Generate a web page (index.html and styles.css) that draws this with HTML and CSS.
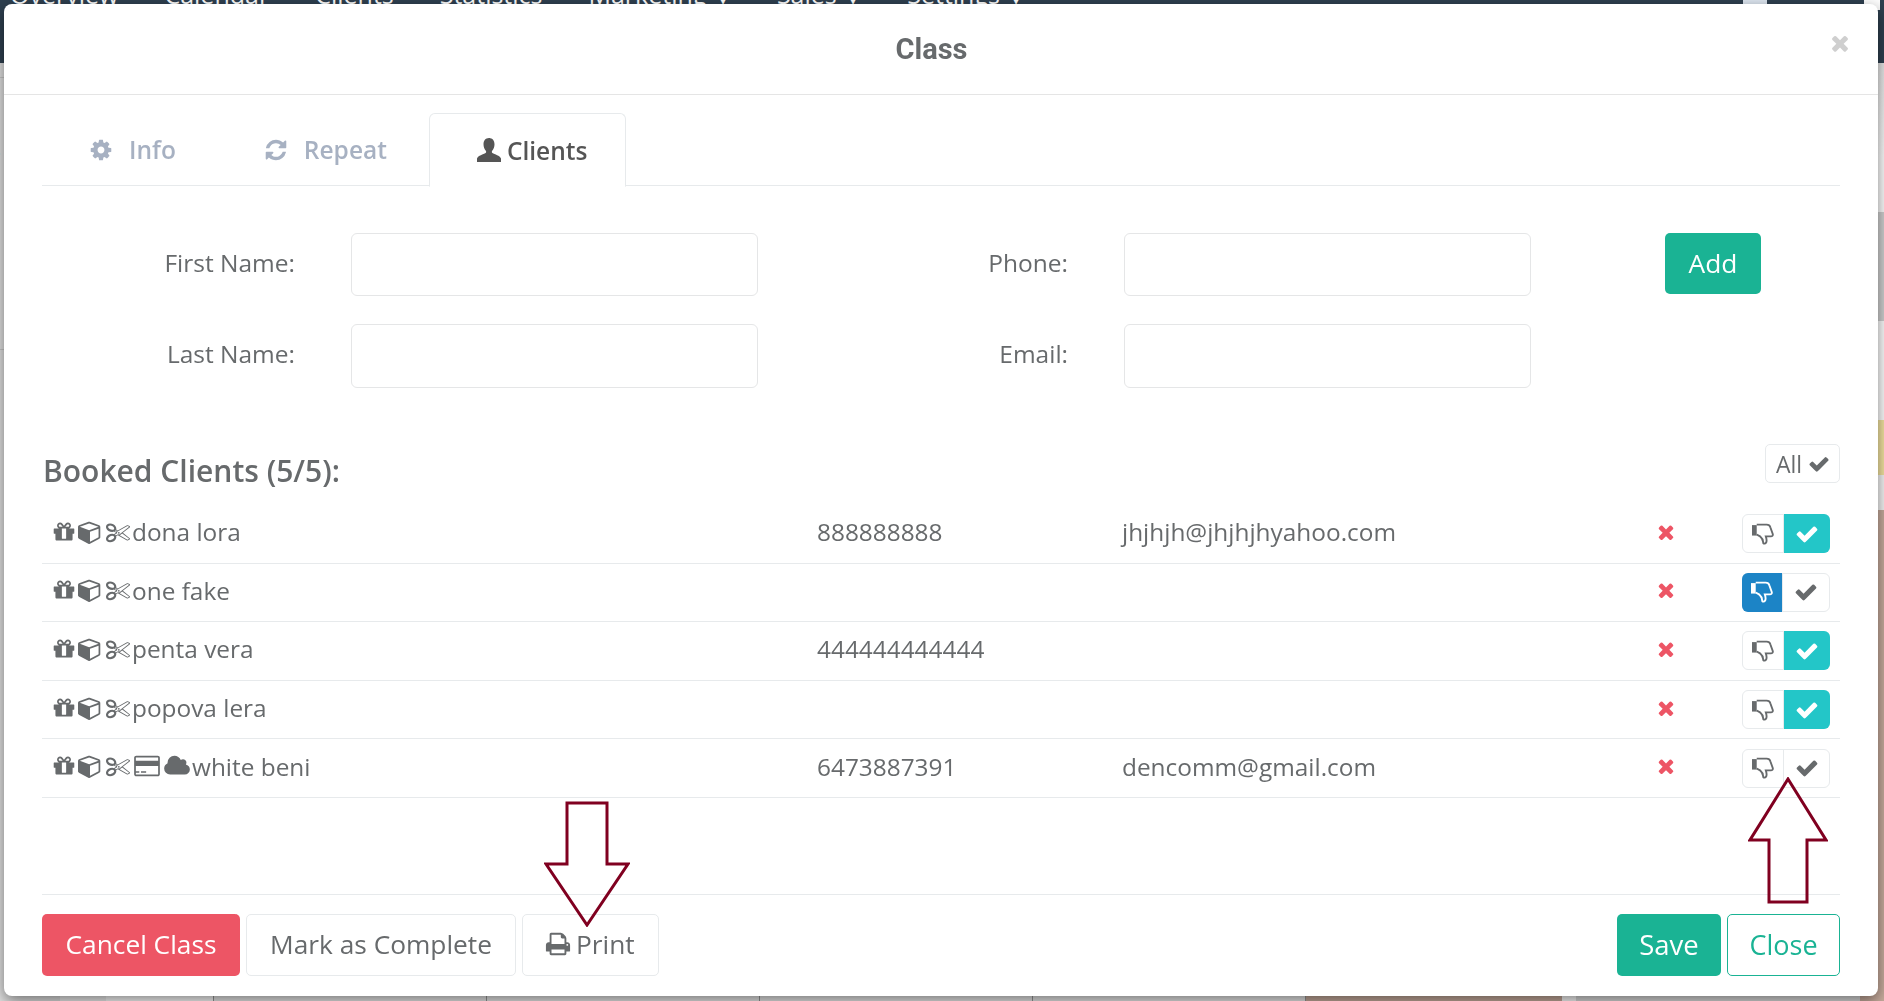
FILE: index.html
```html
<!DOCTYPE html>
<html lang="en">
<head>
  <meta charset="UTF-8" />
  <title>Class</title>
  <link rel="stylesheet" href="styles.css">
</head>
<body>
  <svg class="sprite" xmlns="http://www.w3.org/2000/svg">
    <symbol id="i-check" viewBox="0 0 1792 1792"><path d="M1671 566q0 40-28 68l-724 724-136 136q-28 28-68 28t-68-28l-136-136-362-362q-28-28-28-68t28-68l136-136q28-28 68-28t68 28l294 295 656-657q28-28 68-28t68 28l136 136q28 28 28 68z"/></symbol>
    <symbol id="i-times" viewBox="0 0 1792 1792"><path d="M1490 1322q0 40-28 68l-136 136q-28 28-68 28t-68-28l-294-294-294 294q-28 28-68 28t-68-28l-136-136q-28-28-28-68t28-68l294-294-294-294q-28-28-28-68t28-68l136-136q28-28 68-28t68 28l294 294 294-294q28-28 68-28t68 28l136 136q28 28 28 68t-28 68l-294 294 294 294q28 28 28 68z"/></symbol>
    <symbol id="i-cog" viewBox="0 0 1792 1792"><path d="M1152 896q0-106-75-181t-181-75-181 75-75 181 75 181 181 75 181-75 75-181zm512-109v222q0 12-8 23t-20 13l-185 28q-19 54-39 91 35 50 107 138 10 12 10 25t-9 23q-27 37-99 108t-94 71q-12 0-26-9l-138-108q-44 23-91 38-16 136-29 186-7 28-36 28h-222q-14 0-24.500-8.500t-11.500-21.500l-28-184q-49-16-90-37l-141 107q-10 9-25 9-14 0-25-11-126-114-165-168-7-10-7-23 0-12 8-23 15-21 51-66.500t54-70.500q-27-50-41-99l-183-27q-13-2-21-12.500t-8-23.500v-222q0-12 8-23t19-13l186-28q14-46 39-92-40-57-107-138-10-12-10-24 0-10 9-23 26-36 98.500-107.500t94.500-71.500q13 0 26 10l138 107q44-23 91-38 16-136 29-186 7-28 36-28h222q14 0 24.500 8.500t11.500 21.500l28 184q49 16 90 37l142-107q9-9 24-9 13 0 25 10 129 119 165 170 7 8 7 22 0 12-8 23-15 21-51 66.500t-54 70.500q26 50 41 98l183 28q13 2 21 12.500t8 23.500z"/></symbol>
    <symbol id="i-refresh" viewBox="0 0 1792 1792"><path d="M1639 1056q0 5-1 7-64 268-268 434.500t-478 166.500q-146 0-282.500-55t-243.500-157l-129 129q-19 19-45 19t-45-19-19-45v-448q0-26 19-45t45-19h448q26 0 45 19t19 45-19 45l-137 137q71 66 161 102t187 36q134 0 250-65t186-179q11-17 53-117 8-23 30-23h192q13 0 22.500 9.500t9.500 22.500zm25-800v448q0 26-19 45t-45 19h-448q-26 0-45-19t-19-45 19-45l138-138q-148-137-349-137-134 0-250 65t-186 179q-11 17-53 117-8 23-30 23h-199q-13 0-22.500-9.500t-9.500-22.500v-7q65-268 270-434.500t480-166.500q146 0 284 55.500t245 156.500l130-129q19-19 45-19t45 19 19 45z"/></symbol>
    <symbol id="i-user" viewBox="0 0 24 24"><path d="M12 0c3.600 0 5.500 2.800 5.500 6.300 0 2.700-1 5-2.300 6.400-.5.600-.5 1.800.2 2.300 2.200 1.300 7.600 2.700 8.600 5.400v3.600H0v-3.600c1-2.700 6.400-4.100 8.600-5.400.7-.5.7-1.700.2-2.300C7.500 11.300 6.500 9 6.500 6.300 6.500 2.800 8.400 0 12 0z"/></symbol>
    <symbol id="i-print" viewBox="0 0 1792 1792"><path d="M448 1536h896v-256h-896v256zm0-640h896v-384h-160q-40 0-68-28t-28-68v-160h-640v640zm1152 64q0-26-19-45t-45-19-45 19-19 45 19 45 45 19 45-19 19-45zm128 0v416q0 13-9.500 22.500t-22.500 9.500h-224v160q0 40-28 68t-68 28h-960q-40 0-68-28t-28-68v-160h-224q-13 0-22.500-9.500t-9.500-22.500v-416q0-79 56.500-135.500t135.500-56.500h64v-544q0-40 28-68t68-28h672q40 0 88 20t76 48l152 152q28 28 48 76t20 88v256h64q79 0 135.500 56.500t56.500 135.500z"/></symbol>
    <symbol id="i-gift" viewBox="0 0 1792 1792"><path d="M1056 1356v-716h-320v716q0 25 18 38.500t46 13.500h192q28 0 46-13.500t18-38.500zm-456-844h195l-126-161q-26-31-69-31-40 0-68 28t-28 68 28 68 68 28zm688-96q0-40-28-68t-68-28q-43 0-69 31l-125 161h194q40 0 68-28t28-68zm376 256v320q0 14-9 23t-23 9h-96v416q0 40-28 68t-68 28h-1088q-40 0-68-28t-28-68v-416h-96q-14 0-23-9t-9-23v-320q0-14 9-23t23-9h440q-93 0-158.500-65.500t-65.500-158.500 65.500-158.500 158.500-65.500q107 0 168 77l128 165 128-165q61-77 168-77 93 0 158.500 65.500t65.500 158.500-65.500 158.500-158.500 65.500h440q14 0 23 9t9 23z"/></symbol>
    <symbol id="i-cube" viewBox="0 0 1792 1792"><path d="M896 1629l640-349v-636l-640 233v752zm-64-865l698-254-698-254-698 254zm832-252v768q0 35-18 65t-49 47l-704 384q-28 16-61 16t-61-16l-704-384q-31-17-49-47t-18-65v-768q0-40 23-73t61-47l704-256q22-8 44-8t44 8l704 256q38 14 61 47t23 73z"/></symbol>
    <symbol id="i-scissors" viewBox="0 0 1792 1792"><path d="M960 896q26 0 45 19t19 45-19 45-45 19-45-19-19-45 19-45 45-19zm300 64l507 398q28 20 25 56-5 35-35 51l-128 64q-13 7-29 7-17 0-31-8l-690-387-110 66q-8 4-12 5 14 49 10 97-7 77-56 147.500t-132 123.500q-132 84-277 84-136 0-222-78-90-84-79-207 7-76 56-147t131-124q132-84 278-84 83 0 151 31 9-13 22-22l122-73-122-73q-13-9-22-22-68 31-151 31-146 0-278-84-82-53-131-124t-56-147q-5-59 15.500-113t63.500-93q85-79 222-79 145 0 277 84 83 52 132 123t56 148q4 48-10 97 4 1 12 5l110 66 690-387q14-8 31-8 16 0 29 7l128 64q30 16 35 51 3 36-25 56zm-681-260q46-42 21-108t-106-117q-92-59-192-59-74 0-113 36-46 42-21 108t106 117q92 59 192 59 74 0 113-36zm-85 745q81-51 106-117t-21-108q-39-36-113-36-100 0-192 59-81 51-106 117t21 108q39 36 113 36 100 0 192-59zm178-613l96 58v-11q0-36 33-56l14-8-79-47-26 26q-3 3-10 11t-12 12q-2 2-4 3.500t-3 2.500zm224 224l96 32 736-576-128-64-768 431v113l-160 96 9 8q2 2 7 6 4 4 11 12t11 12l26 26zm704 416l128-64-520-408-177 138q-2 3-13 7z"/></symbol>
    <symbol id="i-card" viewBox="0 0 1920 1792"><path d="M1760 128q66 0 113 47t47 113v1216q0 66-47 113t-113 47h-1600q-66 0-113-47t-47-113v-1216q0-66 47-113t113-47h1600zm-1600 128q-13 0-22.500 9.500t-9.500 22.500v224h1664v-224q0-13-9.500-22.500t-22.500-9.500h-1600zm1600 1280q13 0 22.500-9.500t9.500-22.500v-608h-1664v608q0 13 9.500 22.500t22.500 9.500h1600zm-1632-128v-128h256v128h-256zm384 0v-128h384v128h-384z"/></symbol>
    <symbol id="i-cloud" viewBox="0 0 1920 1792"><path d="M1920 1152q0 159-112.500 271.500t-271.500 112.500h-1088q-185 0-316.500-131.500t-131.500-316.500q0-132 71-241.500t187-163.500q-2-28-2-43 0-212 150-362t362-150q158 0 286.500 88t187.500 230q70-62 166-62 106 0 181 75t75 181q0 75-41 138 129 30 213 134.500t84 239.500z"/></symbol>
    <symbol id="i-thumb" viewBox="0 0 21 21"><path d="M0 2h4.500v10H0z"/><path class="thumb-line" d="M4.500 1.500h9.500c2 0 3 .8 3.500 2.500l2.300 6.500c.4 1.400-.4 2.300-1.800 2.300h-4.800c.5 1.500.8 2.900.7 4.200-.1 1.700-1 2.800-2 2.700-.9 0-1.300-.6-1.300-1.600 0-2.200-1.400-4-3-5.400l-3.100-1.700"/></symbol>
  </svg>

  <div class="page">
    <div class="navbar">
      <span>Overview</span>
      <span>Calendar</span>
      <span>Clients</span>
      <span>Statistics</span>
      <span>Marketing <b class="caret">▾</b></span>
      <span>Sales <b class="caret">▾</b></span>
      <span>Settings <b class="caret">▾</b></span>
      <i class="nav-grid"></i>
      <i class="nav-avatar"></i>
    </div>
    <div class="calendar">
      <div class="cal-col cal-gray"><div class="cal-line-a"></div><div class="cal-s">s</div><div class="cal-line-b"></div></div>
      <div class="cal-col cal-light"></div>
      <div class="cal-col cal-time"><span>2 pm</span></div>
      <div class="cal-col cal-day"></div>
      <div class="cal-col cal-day"></div>
      <div class="cal-col cal-day"></div>
      <div class="cal-col cal-day"></div>
      <div class="cal-col cal-tan"></div>
      <div class="cal-col cal-white-sm"></div>
      <div class="cal-col cal-gray-wide"></div>
      <div class="cal-col cal-last">
        <div class="band band-head"></div>
        <div class="band band-white-a"></div>
        <div class="band band-gray"></div>
        <div class="band band-white-b"></div>
        <div class="band band-yellow"></div>
        <div class="band band-white-c"></div>
        <div class="band band-tan"></div>
      </div>
    </div>
  </div>

  <div class="modal">
    <div class="modal-header">
      <h4 class="modal-title">Class</h4>
      <svg class="modal-close"><use href="#i-times"/></svg>
    </div>
    <div class="modal-body">
      <ul class="tabs">
        <li class="tab"><svg class="tab-icon"><use href="#i-cog"/></svg><span class="tab-gap">Info</span></li>
        <li class="tab"><svg class="tab-icon"><use href="#i-refresh"/></svg><span class="tab-gap">Repeat</span></li>
        <li class="tab active"><svg class="tab-icon"><use href="#i-user"/></svg><span class="tab-gap-sm">Clients</span></li>
      </ul>

      <div class="client-form">
        <label class="form-label">First Name:</label>
        <input class="form-input" type="text" />
        <label class="form-label">Phone:</label>
        <input class="form-input" type="text" />
        <div class="form-action"><button class="btn btn-primary btn-add">Add</button></div>
        <label class="form-label">Last Name:</label>
        <input class="form-input" type="text" />
        <label class="form-label">Email:</label>
        <input class="form-input" type="text" />
      </div>

      <div class="booked-head">
        <h3 class="booked-title">Booked Clients (5/5):</h3>
        <button class="btn-all">All <svg class="all-check"><use href="#i-check"/></svg></button>
      </div>

      <div class="client-list">
        <div class="client-row">
          <div class="client-name">
            <svg class="ic"><use href="#i-gift"/></svg><svg class="ic"><use href="#i-cube"/></svg><svg class="ic ic-sc"><use href="#i-scissors"/></svg>dona lora
          </div>
          <div class="client-cell">888888888</div>
          <div class="client-cell">jhjhjh@jhjhjhyahoo.com</div>
          <svg class="remove"><use href="#i-times"/></svg>
          <div class="toggle">
            <span class="toggle-btn"><svg class="thumb"><use href="#i-thumb"/></svg></span>
            <span class="toggle-btn on-check"><svg class="tick"><use href="#i-check"/></svg></span>
          </div>
        </div>
        <div class="client-row">
          <div class="client-name">
            <svg class="ic"><use href="#i-gift"/></svg><svg class="ic"><use href="#i-cube"/></svg><svg class="ic ic-sc"><use href="#i-scissors"/></svg>one fake
          </div>
          <div class="client-cell"></div>
          <div class="client-cell"></div>
          <svg class="remove"><use href="#i-times"/></svg>
          <div class="toggle">
            <span class="toggle-btn on-thumb"><svg class="thumb"><use href="#i-thumb"/></svg></span>
            <span class="toggle-btn"><svg class="tick"><use href="#i-check"/></svg></span>
          </div>
        </div>
        <div class="client-row">
          <div class="client-name">
            <svg class="ic"><use href="#i-gift"/></svg><svg class="ic"><use href="#i-cube"/></svg><svg class="ic ic-sc"><use href="#i-scissors"/></svg>penta vera
          </div>
          <div class="client-cell">444444444444</div>
          <div class="client-cell"></div>
          <svg class="remove"><use href="#i-times"/></svg>
          <div class="toggle">
            <span class="toggle-btn"><svg class="thumb"><use href="#i-thumb"/></svg></span>
            <span class="toggle-btn on-check"><svg class="tick"><use href="#i-check"/></svg></span>
          </div>
        </div>
        <div class="client-row">
          <div class="client-name">
            <svg class="ic"><use href="#i-gift"/></svg><svg class="ic"><use href="#i-cube"/></svg><svg class="ic ic-sc"><use href="#i-scissors"/></svg>popova lera
          </div>
          <div class="client-cell"></div>
          <div class="client-cell"></div>
          <svg class="remove"><use href="#i-times"/></svg>
          <div class="toggle">
            <span class="toggle-btn"><svg class="thumb"><use href="#i-thumb"/></svg></span>
            <span class="toggle-btn on-check"><svg class="tick"><use href="#i-check"/></svg></span>
          </div>
        </div>
        <div class="client-row">
          <div class="client-name">
            <svg class="ic"><use href="#i-gift"/></svg><svg class="ic"><use href="#i-cube"/></svg><svg class="ic ic-sc"><use href="#i-scissors"/></svg><svg class="ic ic-wide"><use href="#i-card"/></svg><svg class="ic ic-wide"><use href="#i-cloud"/></svg>white beni
          </div>
          <div class="client-cell">6473887391</div>
          <div class="client-cell">dencomm@gmail.com</div>
          <svg class="remove"><use href="#i-times"/></svg>
          <div class="toggle">
            <span class="toggle-btn"><svg class="thumb"><use href="#i-thumb"/></svg></span>
            <span class="toggle-btn"><svg class="tick"><use href="#i-check"/></svg></span>
          </div>
        </div>
      </div>

      <div class="modal-footer">
        <button class="btn btn-danger">Cancel Class</button>
        <button class="btn btn-white">Mark as Complete</button>
        <button class="btn btn-white btn-print"><svg class="print-icon"><use href="#i-print"/></svg>Print</button>
        <button class="btn btn-primary btn-save">Save</button>
        <button class="btn btn-outline">Close</button>
      </div>
    </div>

    <!-- annotation arrows -->
    <svg class="arrow arrow-down" viewBox="0 0 86 126"><polygon points="23,2 63,2 63,63 84,63 43,124 2,63 23,63"/></svg>
    <svg class="arrow arrow-up" viewBox="0 0 80 127"><polygon points="40,2 78,63 59,63 59,125 21,125 21,63 2,63"/></svg>
  </div>
</body>
</html>
```

FILE: styles.css
```css
* {
  box-sizing: border-box;
}
html, body {
  margin: 0;
  padding: 0;
  height: 100%;
  overflow: hidden;
}
body {
  font-family: "Open Sans", Arial, sans-serif;
  color: #676a6c;
  background: #fff;
}
.sprite {
  display: none;
}
.page {
  display: flex;
  flex-direction: column;
  height: 100vh;
}

/* page behind the dialog */
.navbar {
  display: flex;
  align-items: flex-start;
  height: 63px;
  flex: none;
  padding-left: 10px;
  background: #2f4050;
  color: #fff;
  font-size: 25px;
  line-height: 28px;
  gap: 46px;
  overflow: hidden;
}
.navbar span {
  margin-top: -20px;
}
.caret {
  margin-left: 2px;
  font-size: 32px;
  line-height: 0;
}
.nav-grid {
  width: 24px;
  height: 4px;
  margin-left: auto;
  background: #dfe8f2;
}
.nav-avatar {
  width: 16px;
  height: 10px;
  margin: 0 4px 0 51px;
  background: #fff;
}
.calendar {
  flex: 1;
  display: flex;
  min-height: 0;
}
.cal-col {
  display: flex;
  flex-direction: column;
  flex: none;
}
.cal-gray {
  width: 60px;
  background: #e2e2e2;
}
.cal-line-a, .cal-line-b {
  height: 1px;
  background: #c8c8c8;
}
.cal-line-a {
  margin-top: 14px;
}
.cal-s {
  margin: 58px 0 0 -9px;
  font-size: 20px;
  line-height: 28px;
  color: #444;
}
.cal-line-b {
  margin-top: 185px;
}
.cal-light {
  width: 46px;
  background: #f1f1f1;
}
.cal-time {
  width: 108px;
  align-items: flex-end;
  justify-content: flex-end;
  padding-right: 10px;
  background: #fff;
  border-right: 1px solid #999;
  font-size: 24px;
  line-height: 30px;
  color: #444;
}
.cal-time span {
  margin-bottom: -24px;
}
.cal-day {
  width: 273px;
  background: #ececec;
  border-right: 1px solid #999;
}
.cal-tan {
  width: 256px;
  background: #c9ad9e;
}
.cal-white-sm {
  width: 14px;
  background: #fff;
}
.cal-gray-wide {
  width: 284px;
  background: #dedede;
}
.cal-last {
  width: 24px;
}
.band-head {
  height: 94px;
  background: linear-gradient(#e8e8e8, #fff);
}
.band-white-a {
  height: 55px;
  background: #fff;
}
.band-gray {
  height: 109px;
  background: #d2d2d2;
}
.band-white-b {
  height: 99px;
  background: #fff;
}
.band-yellow {
  height: 55px;
  background: #f6e6a2;
}
.band-white-c {
  height: 35px;
  background: #f7f7f7;
}
.band-tan {
  flex: 1;
  background: #c9ad9e;
}

/* dialog */
.modal {
  position: fixed;
  top: 4px;
  left: 4px;
  width: 1874px;
  height: 992px;
  display: flex;
  flex-direction: column;
  background: #fff;
  border-radius: 8px;
  box-shadow: 0 5px 15px rgba(0, 0, 0, 0.5);
}
.modal-header {
  display: flex;
  align-items: center;
  flex: none;
  height: 91px;
  padding: 0 26px 12px 0;
  border-bottom: 1px solid #e5e5e5;
}
.modal-title {
  flex: 1;
  margin: 12px 0 0 31px;
  text-align: center;
  font-family: Roboto, Arial, sans-serif;
  font-size: 29px;
  font-weight: 700;
  color: #676a6c;
}
.modal-close {
  width: 24px;
  height: 24px;
  fill: #cfcfcf;
}
.modal-body {
  flex: 1;
  display: flex;
  flex-direction: column;
  padding: 18px 38px 20px;
  min-height: 0;
}

.tabs {
  display: flex;
  flex: none;
  height: 73px;
  margin: 0;
  padding: 0;
  list-style: none;
  border-bottom: 1px solid #e7eaec;
}
.tab {
  display: flex;
  align-items: center;
  height: 73px;
  padding: 0 46px;
  font-size: 24.5px;
  font-weight: 600;
  color: #a7b1c2;
  border: 1px solid transparent;
}
.tab:first-child {
  margin-right: -6px;
}
.tab.active {
  height: 74px;
  margin-left: -5px;
  padding: 0 38px 0 47px;
  color: #555;
  background: #fff;
  border-color: #e7eaec;
  border-bottom-color: #fff;
  border-radius: 6px 6px 0 0;
}
.tab-icon {
  width: 24px;
  height: 24px;
  fill: currentColor;
}
.tab-gap {
  margin-left: 16px;
}
.tab-gap-sm {
  margin-left: 6px;
}

.client-form {
  display: grid;
  flex: none;
  grid-template-columns: 309px 407px 366px 407px 1fr;
  grid-template-rows: 63px 64px;
  row-gap: 28px;
  margin-top: 47px;
}
.form-label {
  align-self: center;
  padding: 0 56px 5px 0;
  text-align: right;
  font-size: 24.5px;
}
.form-input {
  width: 100%;
  height: 100%;
  border: 1px solid #e5e6e7;
  border-radius: 6px;
  background: #fff;
}
.form-action {
  padding-left: 134px;
}

.btn {
  height: 62px;
  padding: 0 23px;
  border: 1px solid transparent;
  border-radius: 5px;
  font-family: inherit;
  font-size: 26.3px;
}
.btn-primary {
  background: #1ab394;
  color: #fff;
}
.btn-add {
  width: 96px;
  height: 61px;
  padding: 0 0 1px;
}
.btn-danger {
  width: 198px;
  padding: 0 0 2px;
  background: #ed5565;
  color: #fff;
}
.btn-white {
  padding-bottom: 2px;
  background: #fff;
  color: #676a6c;
  border-color: #e7eaec;
}
.btn-print {
  display: flex;
  align-items: center;
  width: 137px;
  padding-left: 22px;
  gap: 5px;
}
.print-icon {
  width: 26px;
  height: 26px;
  fill: currentColor;
}
.btn-save {
  width: 104px;
  padding: 0 0 2px;
  margin-left: auto;
  font-size: 27.5px;
}
.btn-outline {
  width: 113px;
  padding: 0 0 2px;
  background: #fff;
  color: #1ab394;
  border-color: #1ab394;
  font-size: 27px;
}

.booked-head {
  display: flex;
  flex: none;
  justify-content: space-between;
  align-items: flex-start;
  height: 39px;
  margin-top: 56px;
}
.booked-title {
  margin: 9px 0 0 1px;
  font-size: 30px;
  font-weight: 600;
  line-height: 36px;
  color: #676a6c;
}
.btn-all {
  display: flex;
  align-items: center;
  gap: 6px;
  width: 75px;
  height: 39px;
  padding: 0 0 0 10px;
  font-family: inherit;
  font-size: 23px;
  color: #676a6c;
  background: #fff;
  border: 1px solid #e7eaec;
  border-radius: 5px;
}
.all-check {
  width: 22px;
  height: 22px;
  fill: currentColor;
}

.client-list {
  flex: none;
  margin-top: 22px;
}
.client-row {
  display: grid;
  grid-template-columns: 775px 305px 520px 100px 1fr;
  align-items: center;
  height: 58.6px;
  font-size: 24.4px;
  border-bottom: 1px solid #e7eaec;
}
.client-name {
  display: flex;
  align-items: center;
  padding: 0 0 4px 10px;
  gap: 2px;
}
.client-cell {
  padding-bottom: 4px;
}
.ic {
  width: 24px;
  height: 24px;
  fill: currentColor;
}
.ic-sc {
  margin-left: 2px;
}
.ic-wide {
  width: 26px;
  margin-left: 2px;
}
.remove {
  width: 22px;
  height: 22px;
  margin: 0 0 4px 13px;
  fill: #ed5565;
}
.toggle {
  display: flex;
  width: 88px;
  height: 39px;
  border: 1px solid #e7eaec;
  border-radius: 6px;
}
.toggle-btn {
  display: flex;
  align-items: center;
  justify-content: center;
  width: 40px;
  height: 100%;
}
.toggle-btn:last-child {
  flex: 1;
  border-left: 1px solid #e7eaec;
}
.on-check {
  margin: -1px -1px -1px 0;
  height: 39px;
  background: #23c6c8;
  border-left-color: #23c6c8;
  border-radius: 0 6px 6px 0;
  color: #fff;
}
.on-thumb {
  margin: -1px 0 -1px -1px;
  height: 39px;
  background: #1c84c6;
  border-radius: 6px 0 0 6px;
  color: #fff;
}
.thumb {
  width: 22px;
  height: 22px;
  fill: currentColor;
  stroke: none;
}
.thumb-line {
  fill: none;
  stroke: currentColor;
  stroke-width: 1.8;
}
.tick {
  width: 24px;
  height: 24px;
  fill: currentColor;
}

.modal-footer {
  display: flex;
  flex: none;
  gap: 6px;
  margin-top: auto;
  padding-top: 19px;
  border-top: 1px solid #e7eaec;
}

/* red arrows pointed at the print button and the check toggle */
.arrow {
  position: absolute;
  fill: none;
  stroke: #800020;
  stroke-width: 3;
}
.arrow-down {
  left: 540px;
  top: 797px;
  width: 86px;
  height: 126px;
}
.arrow-up {
  left: 1744px;
  top: 773px;
  width: 80px;
  height: 127px;
}
```
